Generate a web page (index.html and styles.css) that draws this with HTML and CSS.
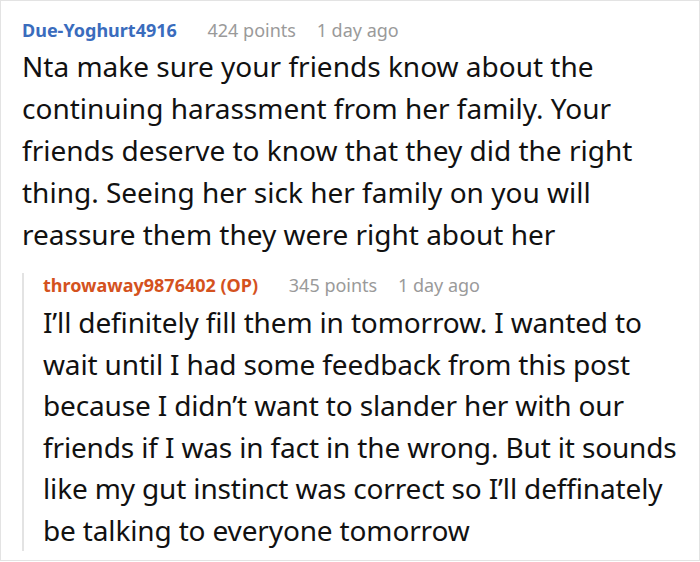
FILE: index.html
```html
<!DOCTYPE html>
<html lang="en">
<head>
    <meta charset="UTF-8">
    <title>Comments</title>
    <link rel="stylesheet" href="styles.css">
</head>
<body>

<div class="thread">
    <div class="comment">
        <div class="meta">
            <span class="author">Due-Yoghurt4916</span>
            <span class="points">424 points</span>
            <span class="time">1 day ago</span>
        </div>
        <p class="body">Nta make sure your friends know about the continuing harassment from her family. Your friends deserve to know that they did the right thing. Seeing her sick her family on you will reassure them they were right about her</p>

        <div class="comment reply">
            <div class="meta">
                <span class="author op">throwaway9876402 (OP)</span>
                <span class="points">345 points</span>
                <span class="time">1 day ago</span>
            </div>
            <p class="body">I’ll definitely fill them in tomorrow. I wanted to wait until I had some feedback from this post because I didn’t want to slander her with our friends if I was in fact in the wrong. But it sounds like my gut instinct was correct so I’ll deffinately be talking to everyone tomorrow</p>
        </div>
    </div>
</div>

</body>
</html>
```

FILE: styles.css
```css
body {
    margin: 0;
    font-family: "Noto Sans", sans-serif;
    background-color: #fff;
}
.thread {
    width: 700px;
    height: 561px;
    box-sizing: border-box;
    border: 1px solid #e3e3e3;
    padding: 17px 0 0 21px;
    overflow: hidden;
}
.meta {
    font-size: 18px;
    line-height: 24px;
    color: #9a9a9a;
}
.author {
    font-weight: bold;
    color: #3a6cbd;
    margin-right: 26px;
}
.author.op {
    color: #d4521e;
}
.points {
    margin-right: 16px;
}
.body {
    margin: 3px 0 0;
    font-size: 28px;
    line-height: 42px;
    color: #111;
}
.reply {
    margin-top: 18px;
    border-left: 2px solid #e3e3e3;
    padding-left: 19px;
}
.reply .body {
    margin-top: 5px;
    line-height: 41.5px;
    letter-spacing: -0.15px;
}
```
